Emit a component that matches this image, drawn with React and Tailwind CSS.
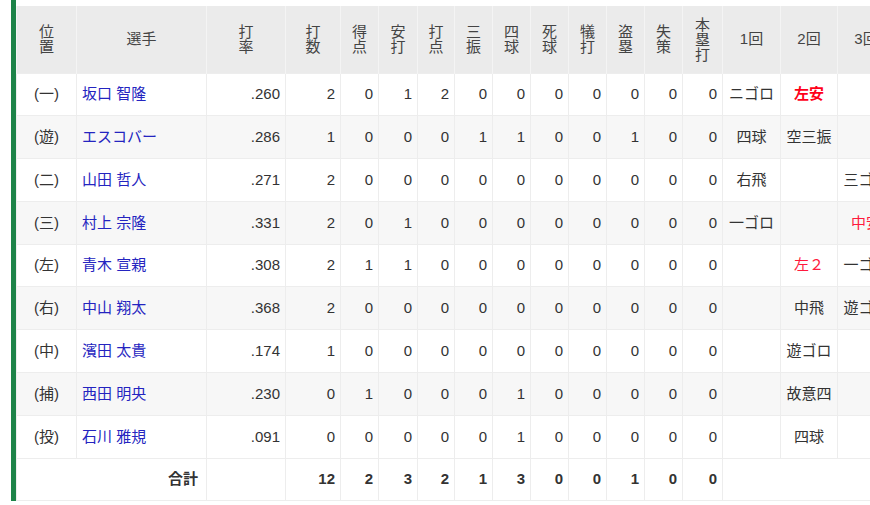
const stats = ['打数', '得点', '安打', '打点', '三振', '四球', '死球', '犠打', '盗塁', '失策', '本塁打'];
const statWidths = [55, 38, 39, 37, 38, 38, 38, 38, 38, 38, 40];
const innings = ['1回', '2回', '3回', '4回', '5回', '6回', '7回', '8回', '9回'];

const players = [
  ['(一)', '坂口 智隆', '.260', [2, 0, 1, 2, 0, 0, 0, 0, 0, 0, 0], ['ニゴロ', { t: '左安', bold: true }, '']],
  ['(遊)', 'エスコバー', '.286', [1, 0, 0, 0, 1, 1, 0, 0, 1, 0, 0], ['四球', '空三振', '']],
  ['(二)', '山田 哲人', '.271', [2, 0, 0, 0, 0, 0, 0, 0, 0, 0, 0], ['右飛', '', '三ゴロ']],
  ['(三)', '村上 宗隆', '.331', [2, 0, 1, 0, 0, 0, 0, 0, 0, 0, 0], ['一ゴロ', '', { t: '中安' }]],
  ['(左)', '青木 宣親', '.308', [2, 1, 1, 0, 0, 0, 0, 0, 0, 0, 0], ['', { t: '左２' }, '一ゴロ']],
  ['(右)', '中山 翔太', '.368', [2, 0, 0, 0, 0, 0, 0, 0, 0, 0, 0], ['', '中飛', '遊ゴロ']],
  ['(中)', '濱田 太貴', '.174', [1, 0, 0, 0, 0, 0, 0, 0, 0, 0, 0], ['', '遊ゴロ', '']],
  ['(捕)', '西田 明央', '.230', [0, 1, 0, 0, 0, 1, 0, 0, 0, 0, 0], ['', '故意四', '']],
  ['(投)', '石川 雅規', '.091', [0, 0, 0, 0, 0, 1, 0, 0, 0, 0, 0], ['', '四球', '']],
];
const totals = [12, 2, 3, 2, 1, 3, 0, 0, 1, 0, 0];

const Stack = ({ text }) => (
  <div className="flex flex-col items-center leading-[15px]">
    {text.split('').map((c, i) => <span key={i}>{c}</span>)}
  </div>
);

const AtBat = ({ v }) => {
  if (!v) return null;
  if (typeof v === 'string') return <span>{v}</span>;
  return <span className={v.bold ? 'text-[#ff0019] font-bold' : 'text-[#ff1a3d]'}>{v.t}</span>;
};

export default function App() {
  const th = 'bg-[#ebebeb] border-x border-[#f4f4f4] font-normal text-[#444] align-middle p-0';
  const td = 'border border-[#ededed] px-[5px] align-middle';
  return (
    <div className="w-[870px] h-[505px] bg-white overflow-hidden pl-[11px]">
      <div
        className="border-l-[5px] border-[#1d8348] pt-[6px] w-max"
        style={{ fontFamily: '"Liberation Sans", "Noto Sans CJK JP", sans-serif' }}
      >
        <table className="table-fixed border-collapse text-[15px] text-[#333] border-b border-[#dcdcdc]">
          <colgroup>
            <col className="w-[60px]" />
            <col className="w-[130px]" />
            <col className="w-[79px]" />
            {statWidths.map((w, i) => <col key={i} style={{ width: w }} />)}
            {innings.map((n, i) => <col key={n} className={i === 0 ? 'w-[58px]' : 'w-[57px]'} />)}
          </colgroup>
          <thead>
            <tr className="h-[67px]">
              <th className={th}><Stack text="位置" /></th>
              <th className={th}>選手</th>
              <th className={th}><Stack text="打率" /></th>
              {stats.map(s => <th key={s} className={th}><Stack text={s} /></th>)}
              {innings.map(n => <th key={n} className={th + ' whitespace-nowrap'}>{n}</th>)}
            </tr>
          </thead>
          <tbody>
            {players.map(([pos, name, avg, nums, abs], r) => (
              <tr key={name} className={'h-[42.8px] ' + (r % 2 ? 'bg-[#f7f7f7]' : 'bg-white')}>
                <td className={td + ' text-center'}>{pos}</td>
                <td className={td + ' text-[#2424c0] whitespace-nowrap'}>{name}</td>
                <td className={td + ' text-right'}>{avg}</td>
                {nums.map((n, i) => <td key={i} className={td + ' text-right'}>{n}</td>)}
                {innings.map((n, i) => (
                  <td key={n} className={td + ' text-center whitespace-nowrap px-0'}>
                    <AtBat v={abs[i]} />
                  </td>
                ))}
              </tr>
            ))}
            <tr className="h-[42px] bg-white font-bold">
              <td colSpan={2} className={td + ' text-right pr-[8px]'}>合計</td>
              <td className={td}></td>
              {totals.map((n, i) => <td key={i} className={td + ' text-right'}>{n}</td>)}
              <td colSpan={innings.length} className={td}></td>
            </tr>
          </tbody>
        </table>
      </div>
    </div>
  );
}
